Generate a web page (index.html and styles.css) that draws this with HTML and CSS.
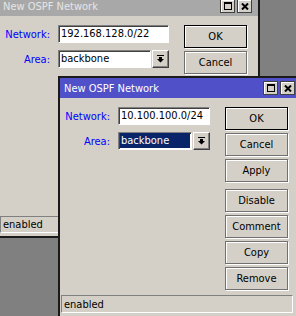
FILE: index.html
```html
<!DOCTYPE html>
<html lang="en">
<head>
  <meta charset="UTF-8">
  <title>New OSPF Network</title>
  <link rel="stylesheet" href="styles.css">
</head>
<body>
  <div class="desktop">
    <div class="win win-back">
      <div class="titlebar">
        <span class="title">New OSPF Network</span>
        <span class="tbtn"><svg width="8" height="8" viewBox="0 0 8 8"><rect x="0.5" y="0.5" width="7" height="7" fill="none" stroke="#000"/><rect x="0" y="0" width="8" height="2" fill="#000"/></svg></span>
        <span class="tbtn"><svg width="8" height="7" viewBox="0 0 8 7"><path d="M1 0.5 L7 6.5 M7 0.5 L1 6.5" stroke="#000" stroke-width="2"/></svg></span>
      </div>
      <div class="win-body">
        <div class="form form-wide">
          <div class="row">
            <span class="lbl">Network:</span>
            <div class="field text">192.168.128.0/22</div>
          </div>
          <div class="row">
            <span class="lbl">Area:</span>
            <div class="field select">
              <div class="text select-box">backbone</div>
              <span class="select-btn"><svg width="7" height="8" viewBox="0 0 7 8"><rect x="0" y="0" width="7" height="1" fill="#000"/><path d="M2 2 H5 V4 H7 L3.5 7.5 L0 4 H2 Z" fill="#000"/></svg></span>
            </div>
          </div>
        </div>
        <div class="actions">
          <div class="btn btn-default">OK</div>
          <div class="btn">Cancel</div>
        </div>
      </div>
      <div class="status"><span>enabled</span></div>
    </div>

    <div class="win win-front">
      <div class="titlebar titlebar-active">
        <span class="title">New OSPF Network</span>
        <span class="tbtn"><svg width="8" height="8" viewBox="0 0 8 8"><rect x="0.5" y="0.5" width="7" height="7" fill="none" stroke="#000"/><rect x="0" y="0" width="8" height="2" fill="#000"/></svg></span>
        <span class="tbtn"><svg width="8" height="7" viewBox="0 0 8 7"><path d="M1 0.5 L7 6.5 M7 0.5 L1 6.5" stroke="#000" stroke-width="2"/></svg></span>
      </div>
      <div class="win-body">
        <div class="form form-narrow">
          <div class="row">
            <span class="lbl">Network:</span>
            <div class="field text">10.100.100.0/24</div>
          </div>
          <div class="row">
            <span class="lbl">Area:</span>
            <div class="field select">
              <div class="text select-box"><span class="selected">backbone</span></div>
              <span class="select-btn"><svg width="7" height="8" viewBox="0 0 7 8"><rect x="0" y="0" width="7" height="1" fill="#000"/><path d="M2 2 H5 V4 H7 L3.5 7.5 L0 4 H2 Z" fill="#000"/></svg></span>
            </div>
          </div>
        </div>
        <div class="actions">
          <div class="btn btn-default">OK</div>
          <div class="btn">Cancel</div>
          <div class="btn">Apply</div>
          <div class="sep"></div>
          <div class="btn">Disable</div>
          <div class="btn">Comment</div>
          <div class="btn">Copy</div>
          <div class="btn">Remove</div>
        </div>
      </div>
      <div class="status status-front"><span>enabled</span></div>
    </div>
  </div>
</body>
</html>
```

FILE: styles.css
```css
body {
  margin: 0;
  background: #808080;
  font-family: "DejaVu Sans Condensed", "Liberation Sans", Arial, sans-serif;
  font-size: 11px;
  color: #000;
}
.desktop {
  position: relative;
  width: 296px;
  height: 316px;
  overflow: hidden;
}
.win {
  position: absolute;
  display: flex;
  flex-direction: column;
  box-sizing: border-box;
  background: #d4d0c8;
  border: 2px solid #1a1a1a;
}
.win-back {
  left: -2px;
  top: -6px;
  width: 262px;
  height: 244px;
}
.win-front {
  left: 58px;
  top: 76px;
  width: 245px;
  height: 242px;
}
.titlebar {
  display: flex;
  align-items: center;
  height: 20px;
  flex-shrink: 0;
  padding: 0 6px 0 3px;
  background: #a8a8a8;
  color: #e6e6e6;
}
.titlebar-active {
  background: #5050c8;
  color: #fff;
  padding-left: 4px;
}
.title {
  flex: 1;
  padding-top: 1px;
}
.tbtn {
  display: flex;
  align-items: center;
  justify-content: center;
  box-sizing: border-box;
  width: 15px;
  height: 14px;
  margin-left: 2px;
  background: #d4d0c8;
  border: 1px solid #404040;
  box-shadow: inset 1px 1px #fff;
}
.win-body {
  display: flex;
  flex: 1;
  padding-top: 9px;
}
.row {
  display: flex;
  align-items: center;
  height: 18px;
  margin-bottom: 7px;
}
.lbl {
  width: 50px;
  margin-right: 8px;
  text-align: right;
  color: #0000ff;
}
.form-wide .field {
  width: 111px;
}
.form-narrow .field {
  width: 92px;
}
.text {
  box-sizing: border-box;
  height: 18px;
  padding: 0 2px;
  line-height: 16px;
  background: #fff;
  border: 1px solid;
  border-color: #808080 #fff #fff #808080;
  box-shadow: inset 1px 1px #404040;
  white-space: nowrap;
  overflow: hidden;
}
.select {
  display: flex;
  gap: 1px;
}
.select-box {
  flex: 1;
}
.selected {
  display: block;
  margin: 0 -1px 0 -1px;
  padding-left: 1px;
  height: 15px;
  line-height: 15px;
  background: #0a246a;
  color: #fff;
}
.select-btn {
  display: flex;
  align-items: center;
  justify-content: center;
  box-sizing: border-box;
  width: 17px;
  height: 18px;
  border: 1px solid;
  border-color: #fff #404040 #404040 #fff;
  box-shadow: inset -1px -1px #808080;
}
.actions {
  display: flex;
  flex-direction: column;
  margin-left: 15px;
}
.btn {
  display: flex;
  align-items: center;
  justify-content: center;
  box-sizing: border-box;
  width: 63px;
  height: 23px;
  margin-bottom: 3px;
  border: 1px solid #707070;
  box-shadow: inset 1px 1px #fff, 1px 1px #fff;
}
.btn-default {
  border-color: #000;
}
.sep {
  height: 4px;
}
.status {
  display: flex;
  align-items: center;
  box-sizing: border-box;
  height: 17px;
  margin: 0 8px 3px 0;
  padding-left: 2px;
  border: 1px solid;
  border-color: #808080 #fff #fff #808080;
}
.status-front {
  margin-left: 1px;
  height: 18px;
}
```
